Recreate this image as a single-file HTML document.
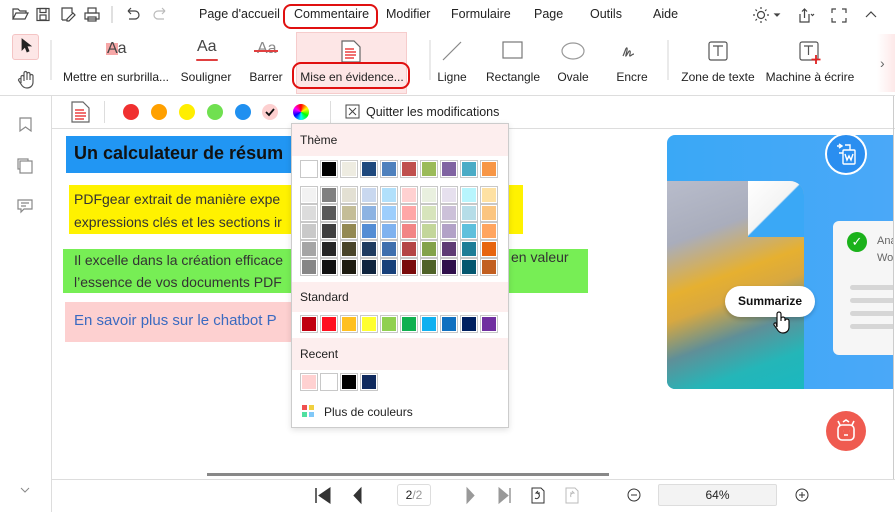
<!DOCTYPE html>
<html><head><meta charset="utf-8"><style>
*{box-sizing:border-box;margin:0;padding:0}
body{width:895px;height:512px;overflow:hidden;background:#fff;font-family:"Segoe UI","Liberation Sans",sans-serif;font-size:12px;color:#222;position:relative}
.a{position:absolute}
.menu span{position:absolute;top:7px;font-size:12.5px}
.rl{position:absolute;top:70px;font-size:12px;white-space:nowrap;transform:translateX(-50%)}
.sw{position:absolute;width:18px;height:18px;border:1px solid #c8c8c8;padding:1px;background:#fff}
.sw i{display:block;width:100%;height:100%}
.hd{position:absolute;left:292px;width:216px;background:#fdeeee;font-size:12px;padding-left:8px}
.dot{position:absolute;top:104px;width:16px;height:16px;border-radius:50%}
</style></head><body>
<svg class="a" style="left:0;top:0" width="170" height="30" fill="none" stroke="#444" stroke-width="1.2">
<path d="M13 19V9h5l2 2h6v2M13 19l3-6h12l-3 6z"/>
<rect x="37" y="8.5" width="12" height="12"/><rect x="40" y="8.5" width="6" height="4"/><rect x="40" y="15" width="6" height="5"/>
<path d="M62 20V8h10v5M62 20h5M67 19l6-6 2 2-6 6h-2z"/>
<rect x="85" y="13" width="14" height="6"/><rect x="88" y="8" width="8" height="5"/><rect x="88" y="17" width="8" height="4"/>
<path d="M112 6v17" stroke="#ccc"/>
<path d="M128 11h7a4 4 0 010 8h-6M128 11l3-3M128 11l3 3"/>
<path d="M165 11h-7a4 4 0 000 8h6M165 11l-3-3M165 11l-3 3" stroke="#bbb"/>
</svg>
<div class="menu">
<span style="left:199px">Page d'accueil</span>
<span style="left:294px">Commentaire</span>
<span style="left:386px">Modifier</span>
<span style="left:451px">Formulaire</span>
<span style="left:534px">Page</span>
<span style="left:590px">Outils</span>
<span style="left:653px">Aide</span>
</div>
<div class="a" style="left:283px;top:4px;width:95px;height:25px;border:2.5px solid #e01010;border-radius:8px"></div>
<svg class="a" style="left:750px;top:4px" width="140" height="22" fill="none" stroke="#444" stroke-width="1.2">
<circle cx="11" cy="11" r="3.5"/><path d="M11 3v2M11 17v2M3 11h2M17 11h2M5.5 5.5l1.4 1.4M15.1 15.1l1.4 1.4M5.5 16.5l1.4-1.4M15.1 6.9l1.4-1.4"/>
<path d="M25 10l2 2 2-2z" fill="#444"/>
<path d="M50 10v8h9v-8M54.5 14V5M52 7.5l2.5-2.5 2.5 2.5"/><path d="M61 10l1.5 1.5L64 10" />
<path d="M82 9V5h4M92 5h4v4M96 14v4h-4M86 18h-4v-4"/>
<path d="M116 13l5-5 5 5"/>
</svg>
<div class="a" style="left:12px;top:34px;width:27px;height:26px;background:#fde6e6;border:1px solid #f4c4c4;border-radius:3px"></div>
<svg class="a" style="left:0;top:30px" width="895" height="65" fill="none" stroke="#555" stroke-width="1.2">
<path d="M22 9v11l3-3 2 5 2-1-2-5h4z" fill="#222" stroke="#222" stroke-width=".8"/>
<path d="M21 53v-6a1.5 1.5 0 013 0v4-8a1.5 1.5 0 013 0v7-6a1.5 1.5 0 013 0v6-4a1.5 1.5 0 013 0v6c0 4-3 6-6 6s-5-2-6-4l-2-3a1.4 1.4 0 012-2z"/>
<path d="M51 10v40M430 10v40M668 10v40" stroke="#ddd"/>
<path d="M443 30l18-18" stroke="#888"/>
<rect x="503" y="12" width="19" height="16" stroke="#777"/>
<ellipse cx="573" cy="21" rx="11" ry="8" stroke="#999"/>
<path d="M623 26c2-4 3-9 4-8s-2 9-1 8 3-6 4-5-1 5 0 5 2-2 4-2" stroke="#555"/>
<rect x="709" y="12" width="18" height="18" rx="2"/><path d="M713 16h10M718 16v10"/>
<rect x="800" y="12" width="18" height="18" rx="2"/><path d="M804 16h9M808.5 16v9"/>
<path d="M816 25v9M811.5 29.5h9" stroke="#e02020" stroke-width="1.8"/>
</svg>
<div class="a" style="left:106px;top:43px;width:12px;height:12px;background:#f6a7a7"></div>
<div class="a" style="left:107px;top:40px;font-size:16px;color:#444">Aa</div>
<div class="a" style="left:197px;top:38px;font-size:16px;color:#444">Aa</div>
<div class="a" style="left:196px;top:59px;width:22px;height:2px;background:#e04040;border-radius:1px"></div>
<div class="a" style="left:257px;top:40px;font-size:16px;color:#888">Aa</div>
<div class="a" style="left:254px;top:50px;width:24px;height:1.5px;background:#e04040"></div>
<div class="a" style="left:296px;top:32px;width:111px;height:62px;background:#fde6e6;border:1px solid #f6cccc"></div>
<svg class="a" style="left:340px;top:40px" width="22" height="24" fill="none"><path d="M2 1h12l6 6v15H2z" stroke="#666" stroke-width="1.2" fill="#fff"/><path d="M5 9h9M5 12h11M5 15h11M5 18h9" stroke="#f07070" stroke-width="2"/></svg>
<div class="a" style="left:877px;top:34px;width:18px;height:58px;background:linear-gradient(90deg,#fff,#fde8e8)"></div>
<div class="a" style="left:880px;top:55px;color:#666;font-size:14px">›</div>
<div class="rl" style="left:116px">Mettre en surbrilla...</div>
<div class="rl" style="left:206px">Souligner</div>
<div class="rl" style="left:266px">Barrer</div>
<div class="rl" style="left:352px">Mise en évidence...</div>
<div class="a" style="left:292px;top:62px;width:118px;height:27px;border:2.5px solid #e01010;border-radius:9px"></div>
<div class="rl" style="left:452px">Ligne</div>
<div class="rl" style="left:513px">Rectangle</div>
<div class="rl" style="left:573px">Ovale</div>
<div class="rl" style="left:632px">Encre</div>
<div class="rl" style="left:718px">Zone de texte</div>
<div class="rl" style="left:810px">Machine à écrire</div>
<div class="a" style="left:0;top:95px;width:895px;height:1px;background:#ddd"></div>
<div class="a" style="left:51px;top:96px;width:1px;height:416px;background:#ddd"></div>
<svg class="a" style="left:0;top:96px" width="51" height="416" fill="none" stroke="#888" stroke-width="1.2">
<path d="M20 22h11v13l-5.5-4-5.5 4z"/>
<rect x="18" y="63" width="10" height="10"/><rect x="20" y="65" width="12" height="12" fill="#fff"/>
<path d="M18 104h14v9h-8l-3 3v-3h-3zM21 107h8M21 110h5"/>
<path d="M21 392l4 4 4-4" stroke="#888" stroke-width="1"/>
</svg>
<svg class="a" style="left:70px;top:100px" width="22" height="24" fill="none"><path d="M2 2h11l6 6v14H2z" stroke="#666" stroke-width="1.2"/><path d="M5 10h9M5 13h11M5 16h11M5 19h9" stroke="#f07070" stroke-width="2"/></svg>
<div class="a" style="left:104px;top:101px;width:1px;height:22px;background:#ddd"></div>
<div class="dot" style="left:123px;background:#f03030"></div>
<div class="dot" style="left:151px;background:#ffa000"></div>
<div class="dot" style="left:179px;background:#ffee00"></div>
<div class="dot" style="left:207px;background:#70e050"></div>
<div class="dot" style="left:235px;background:#2090f0"></div>
<div class="dot" style="left:262px;background:#fdd0d0"></div>
<svg class="a" style="left:262px;top:104px" width="16" height="16"><path d="M4 8l3 3 5-6" stroke="#111" stroke-width="1.8" fill="none"/></svg>
<div class="dot" style="left:293px;background:conic-gradient(#f00,#ff0,#0f0,#0ff,#00f,#f0f,#f00)"></div>
<div class="a" style="left:330px;top:101px;width:1px;height:22px;background:#ddd"></div>
<svg class="a" style="left:345px;top:104px" width="16" height="16" fill="none" stroke="#444"><rect x="1" y="1" width="13" height="13"/><path d="M4 4l7 7M11 4l-7 7"/></svg>
<div class="a" style="left:366px;top:105px;font-size:12.5px">Quitter les modifications</div>
<div class="a" style="left:52px;top:128px;width:843px;height:1px;background:#ddd"></div>
<div class="a" style="left:893px;top:96px;width:1px;height:384px;background:#ccc"></div>
<div class="a" style="left:66px;top:136px;width:226px;height:37px;background:#2196f3"></div>
<div class="a" style="left:74px;top:143px;font-size:18px;font-weight:bold;color:#111;font-family:'Liberation Sans',sans-serif;white-space:nowrap">Un calculateur de résum</div>
<div class="a" style="left:69px;top:185px;width:454px;height:49px;background:#fff200"></div>
<div class="a" style="left:74px;top:188px;font-size:14px;line-height:23px;color:#333;white-space:nowrap">PDFgear extrait de manière expe<br>expressions clés et les sections ir</div>
<div class="a" style="left:63px;top:249px;width:525px;height:44px;background:#77ee55"></div>
<div class="a" style="left:74px;top:249px;font-size:14px;line-height:22px;color:#333;white-space:nowrap">Il excelle dans la création efficace<br>l’essence de vos documents PDF</div>
<div class="a" style="left:511px;top:249px;font-size:14px;color:#333">en valeur</div>
<div class="a" style="left:65px;top:302px;width:230px;height:40px;background:#fdd0d0"></div>
<div class="a" style="left:74px;top:312px;font-size:15px;color:#3a6ac0;white-space:nowrap">En savoir plus sur le chatbot P</div>
<div class="a" style="left:667px;top:135px;width:226px;height:254px;background:linear-gradient(90deg,#3aa8f6,#4aa8f8);border-radius:8px 0 0 8px;overflow:hidden">
<div class="a" style="left:0;top:46px;width:137px;height:208px;border-top-right-radius:14px;background:linear-gradient(160deg,#b8bccb 0%,#a9adbc 25%,#e6b030 45%,#d8a840 55%,#5f8f98 70%,#24b6b8 85%,#1ab8c0 100%)"></div>
<div class="a" style="left:81px;top:46px;width:56px;height:56px;background:linear-gradient(135deg,#fff 0%,#f4f4f4 48%,#3aa8f6 50%);border-top-right-radius:14px"></div>
<div class="a" style="left:166px;top:86px;width:70px;height:134px;background:#f6f6f6;border-radius:6px"></div>
<div class="a" style="left:180px;top:97px;width:20px;height:20px;border-radius:50%;background:#1bb21b;color:#fff;font-size:13px;text-align:center;line-height:20px">✓</div>
<div class="a" style="left:210px;top:98px;font-size:11px;line-height:17px;color:#666">Ana<br>Wo</div>
<div class="a" style="left:183px;top:150px;width:50px;height:5px;background:#d6d6d6;border-radius:3px;box-shadow:0 13px 0 #d6d6d6,0 26px 0 #d6d6d6,0 39px 0 #d6d6d6"></div>
<div class="a" style="left:58px;top:151px;width:90px;height:31px;background:#fff;border-radius:16px;box-shadow:0 2px 4px rgba(0,0,0,.2);font-size:12px;font-weight:bold;color:#111;text-align:center;line-height:31px;font-family:'Liberation Sans',sans-serif">Summarize</div>
<svg class="a" style="left:104px;top:174px" width="22" height="26"><path d="M6 18V5a2 2 0 014 0v7-2a2 2 0 014 0v2a2 2 0 014 0v6c0 4-3 6-6 6s-5-2-6-4l-3-4a1.5 1.5 0 012-2z" fill="#fff" stroke="#111" stroke-width="1.2"/></svg>
</div>
<div class="a" style="left:825px;top:133px;width:42px;height:42px;border-radius:50%;background:#2a8ef0;border:2px solid #fff"></div>
<svg class="a" style="left:833px;top:141px" width="28" height="28" fill="none" stroke="#fff" stroke-width="1.4"><path d="M4 5h5M6 3l3 2-3 2M12 4h5v7M6 12h6"/><rect x="10" y="9" width="12" height="14" rx="1" fill="#2a8ef0"/><path d="M12 13l2 6 2-4 2 4 2-6"/></svg>
<div class="a" style="left:826px;top:411px;width:40px;height:40px;border-radius:50%;background:#ef5b50"></div>
<svg class="a" style="left:826px;top:411px" width="40" height="40" fill="none" stroke="#fff" stroke-width="1.6"><rect x="12" y="14" width="16" height="15" rx="4"/><path d="M14 14l-2-4M26 14l2-4M17 11l3-2 3 2M17 20h.1M23 20h.1M18 24h4"/></svg>
<div class="a" style="left:207px;top:473px;width:402px;height:3px;background:#888"></div>
<div class="a" style="left:52px;top:479px;width:843px;height:1px;background:#ddd"></div>
<svg class="a" style="left:300px;top:480px" width="520" height="32" fill="#333" stroke="#333">
<path d="M16 8v15" stroke-width="1.5"/><path d="M30 8v15l-11-7.5z"/>
<path d="M61 8v15l-7-7.5z"/>
<path d="M167 8v15l7-7.5z" fill="#999" stroke="#999"/>
<path d="M199 8v15l9-7.5z" fill="#999" stroke="#999"/><path d="M210 8v15" stroke="#999" stroke-width="1.5"/>
<path d="M232 8h9l3 3v12h-12z" fill="none"/><path d="M240 13h-4l2-2M236 13c3 0 4 2 3 4s-3 2-4 1" fill="none"/>
<path d="M266 8h9l3 3v12h-12z" fill="none" stroke="#bbb"/><path d="M270 13h4l-2-2M274 13c-3 0-4 2-3 4" fill="none" stroke="#bbb"/>
<circle cx="334" cy="15" r="6" fill="none"/><path d="M331 15h6" fill="none"/>
<circle cx="502" cy="15" r="6" fill="none"/><path d="M499 15h6M502 12v6" fill="none"/>
</svg>
<div class="a" style="left:397px;top:484px;width:34px;height:22px;border:1px solid #ddd;border-radius:3px;font-size:12px;text-align:center;line-height:20px">2<span style="color:#999">/2</span></div>
<div class="a" style="left:658px;top:484px;width:119px;height:22px;border:1px solid #ddd;background:#f3f3f3;border-radius:2px;font-size:12px;text-align:center;line-height:20px">64%</div>
<div class="a" style="left:291px;top:123px;width:218px;height:305px;background:#fff;border:1px solid #ccc;box-shadow:0 2px 6px rgba(0,0,0,.12)"></div>
<div class="hd" style="top:124px;height:32px;line-height:32px">Thème</div>
<div class="hd" style="top:282px;height:30px;line-height:30px">Standard</div>
<div class="hd" style="top:338px;height:32px;line-height:32px">Recent</div>
<div id="sw"></div>
<div class="a" style="left:302px;top:405px;width:5px;height:5px;background:#f05050"></div>
<div class="a" style="left:309px;top:405px;width:5px;height:5px;background:#f0d040"></div>
<div class="a" style="left:302px;top:412px;width:5px;height:5px;background:#50e0a0"></div>
<div class="a" style="left:309px;top:412px;width:5px;height:5px;background:#80c8f8"></div>
<div class="a" style="left:324px;top:405px;font-size:12px">Plus de couleurs</div>
<script>
var rows=[[160,["#fff","#000","#eeece1","#1f497d","#4f81bd","#c0504d","#9bbb59","#8064a2","#4bacc6","#f79646"]],
[186,["#f2f2f2","#808080","#e3e0d3","#c9d8ef","#b1e0fb","#ffd1d1","#e9f0df","#e6e0ee","#b8f5fd","#fee1a3"]],
[204,["#dcdcdc","#595959","#c4bd97","#8db3e2","#9dcefc","#ffa7a7","#d7e4bc","#ccc1d9","#b6dde8","#fbc580"]],
[222,["#c9c9c9","#3f3f3f","#938953","#548dd4","#7fb2ef","#f28585","#c3d69b","#b2a2c7","#5fc0dc","#ffa560"]],
[240,["#a5a5a5","#262626","#494429","#1f3b5f","#3f6fad","#b44545","#83a24a","#5e3b74","#1e7d96","#e7650f"]],
[258,["#868686","#111","#1d1b10","#0f243e","#17407a","#7a0b0b","#4f6228","#30104c","#04576f","#c25f20"]],
[315,["#c00010","#ff1020","#ffc020","#ffff30","#90d050","#10b050","#10b0f0","#1070c0","#002060","#7030a0"]],
[373,["#ffd1d1","#fff","#000","#0f2a5e"]]];
var h="";rows.forEach(function(r){r[1].forEach(function(c,i){h+='<div class="sw" style="left:'+(300+i*20)+'px;top:'+r[0]+'px"><i style="background:'+c+'"></i></div>';});});
document.getElementById("sw").innerHTML=h;
</script>
</body></html>
